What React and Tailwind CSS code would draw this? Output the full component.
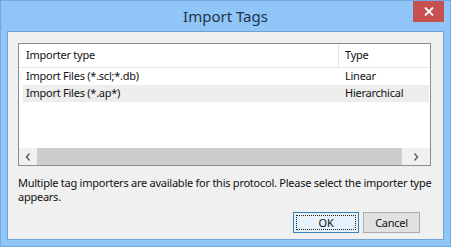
export default function App() {
  const font = { fontFamily: '"Noto Sans", "Open Sans", sans-serif' };
  return (
    <div className="w-[451px] h-[247px] bg-[#8fc5f7] border border-[#74a9dd] flex flex-col relative" style={font}>
      <div className="h-[30px] flex items-center justify-center text-[15px] text-[#223447]">
        Import Tags
      </div>
      <div className="absolute top-0 right-[6px] w-[31px] h-[21px] bg-[#c75050] flex items-center justify-center">
        <svg width="10" height="9" viewBox="0 0 10 9">
          <path d="M1 0.5 L9 8.5 M9 0.5 L1 8.5" stroke="white" strokeWidth="1.8" />
        </svg>
      </div>
      <div className="mx-[6px] h-[209px] bg-[#f0f0f0] border border-[#6fa3d6] flex flex-col text-[11px] tracking-[-0.25px] text-[#111]">
        <div className="mt-[11px] ml-[10px] w-[413px] h-[123px] bg-white border border-[#8a8c8f] flex flex-col">
          <div className="h-[24px] flex border-b border-[#e8e8e8]">
            <div className="w-[320px] border-r border-[#e5e5e5] pl-[7px] flex items-center">Importer type</div>
            <div className="pl-[6px] flex items-center">Type</div>
          </div>
          <div className="h-[17px] flex items-center">
            <div className="w-[321px] pl-[7px]">Import Files (*.scl;*.db)</div>
            <div className="pl-[5px]">Linear</div>
          </div>
          <div className="h-[17px] flex items-center ml-[4px] mr-[1px] bg-[#ededed]">
            <div className="w-[317px] pl-[3px]">Import Files (*.ap*)</div>
            <div className="pl-[5px]">Hierarchical</div>
          </div>
          <div className="flex-1" />
          <div className="h-[17px] flex bg-[#f0f0f0]">
            <div className="w-[18px] flex items-center justify-center">
              <svg width="6" height="8" viewBox="0 0 6 8"><path d="M4.5 0.5 L1.5 4 L4.5 7.5" stroke="#606060" strokeWidth="1.5" fill="none" /></svg>
            </div>
            <div className="flex-1 bg-[#cdcdcd]" />
            <div className="w-[28px] flex items-center justify-center">
              <svg width="6" height="8" viewBox="0 0 6 8"><path d="M1.5 0.5 L4.5 4 L1.5 7.5" stroke="#606060" strokeWidth="1.5" fill="none" /></svg>
            </div>
          </div>
        </div>
        <div className="ml-[10px] mt-[10px] leading-[14px] w-[420px]">
          Multiple tag importers are available for this protocol. Please select the importer type appears.
        </div>
        <div className="flex-1" />
        <div className="flex justify-end gap-[4px] mr-[23px] mb-[6px]">
          <div className="w-[66px] h-[21px] border border-[#3c7fb1] bg-[#e5f1fb] p-[2px]">
            <div className="w-full h-full border border-dotted border-[#222] flex items-center justify-center leading-none">OK</div>
          </div>
          <div className="w-[57px] h-[21px] border border-[#adadad] bg-[#e1e1e1] flex items-center justify-center leading-none">Cancel</div>
        </div>
      </div>
    </div>
  );
}
